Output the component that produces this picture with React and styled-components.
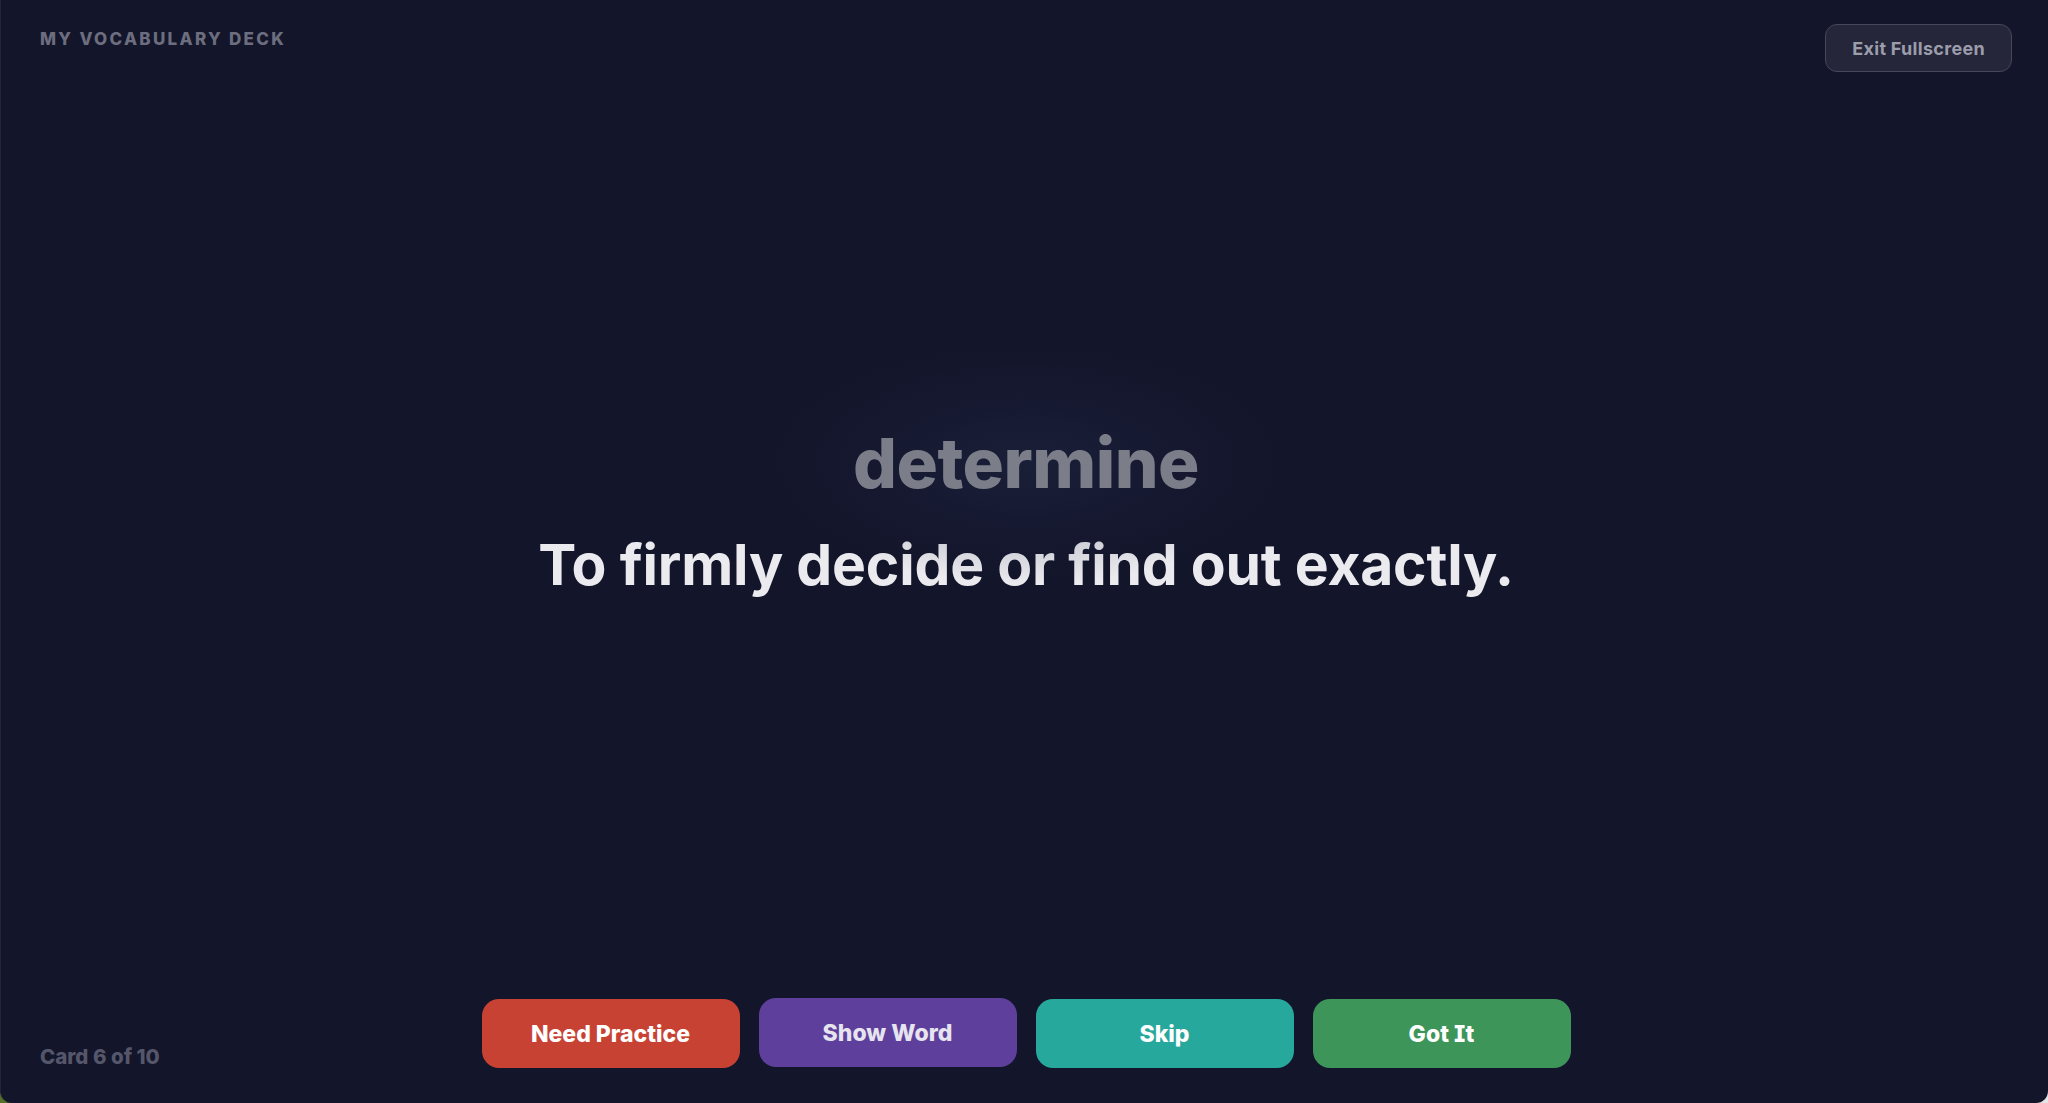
import React from "react";
import styled, { createGlobalStyle } from "styled-components";

const Global = createGlobalStyle`
  html, body { margin: 0; padding: 0; height: 100%; }
  body {
    background: linear-gradient(90deg, #56702a 0%, #3b4a2a 30%, #9aa0a8 70%, #e4e4e4 100%);
    font-family: Inter, "Noto Sans", Lato, sans-serif;
    font-feature-settings: "cv08" 1;
    overflow: hidden;
  }
  #root { height: 100%; }
`;

const Screen = styled.div`
  height: 100vh;
  box-sizing: border-box;
  background: #13152a;
  border-radius: 0 0 12px 12px;
  border-left: 1px solid #22243a;
  display: grid;
  grid-template-rows: auto 1fr auto;
  padding: 24px 36px 35px 39px;
  position: relative;
  overflow: hidden;
`;

const TopBar = styled.header`
  display: flex;
  justify-content: space-between;
  align-items: flex-start;
`;

const DeckTitle = styled.h1`
  margin: 5px 0 0;
  font-size: 17px;
  font-weight: 800;
  letter-spacing: 2.3px;
  color: #6c6d7e;
  text-transform: uppercase;
`;

const GhostButton = styled.button`
  height: 48px;
  padding: 0 26px;
  border-radius: 12px;
  border: 1.5px solid #45475a;
  background: #25263a;
  color: #9c9dab;
  font-family: inherit;
  font-feature-settings: "cv08" 1;
  font-size: 18px;
  font-weight: 700;
  letter-spacing: 0.3px;
  cursor: pointer;
`;

const Stage = styled.main`
  display: flex;
  flex-direction: column;
  align-items: center;
  justify-content: center;
  padding-bottom: 46px;
`;

const WordWrap = styled.div`
  position: relative;
  display: flex;
  justify-content: center;
  margin-bottom: 36px;
`;

const Glow = styled.div`
  position: absolute;
  left: 50%;
  top: 50%;
  width: 520px;
  height: 240px;
  transform: translate(-50%, -50%);
  border-radius: 50%;
  background: radial-gradient(ellipse at center, rgba(40, 52, 86, 0.32) 0%, rgba(30, 38, 70, 0.16) 45%, rgba(19, 21, 42, 0) 72%);
  pointer-events: none;
`;

const Word = styled.div`
  position: relative;
  font-size: 69px;
  font-weight: 800;
  letter-spacing: -0.5px;
  color: #7b7d89;
  line-height: 1;
`;

const Definition = styled.div`
  font-size: 57px;
  font-weight: 700;
  color: #ebebef;
  line-height: 1.1;
  letter-spacing: -0.2px;
`;

const BottomBar = styled.footer`
  display: grid;
  grid-template-columns: 1fr auto 1fr;
  align-items: end;
`;

const Counter = styled.div`
  font-size: 20.5px;
  font-weight: 800;
  color: #55566a;
  margin-bottom: -1px;
`;

const Actions = styled.div`
  display: flex;
  gap: 19px;
  align-items: center;
`;

const ActionButton = styled.button`
  width: 258px;
  height: 69px;
  border: none;
  border-radius: 17px;
  background: ${(p) => p.$bg};
  color: ${(p) => p.$fg || "#ffffff"};
  font-family: inherit;
  font-feature-settings: "cv08" 1;
  font-size: 23px;
  font-weight: 800;
  cursor: pointer;
  transform: translateY(${(p) => (p.$raised ? "-1px" : "0")});
`;

const buttons = [
  { label: "Need Practice", bg: "#c84233" },
  { label: "Show Word", bg: "#5e3f9c", fg: "#e6e4ee", raised: true },
  { label: "Skip", bg: "#27a89c" },
  { label: "Got It", bg: "#3d955a" },
];

export default function App() {
  return (
    <>
      <Global />
      <Screen>
        <TopBar>
          <DeckTitle>My Vocabulary Deck</DeckTitle>
          <GhostButton>Exit Fullscreen</GhostButton>
        </TopBar>
        <Stage>
          <WordWrap>
            <Glow />
            <Word>determine</Word>
          </WordWrap>
          <Definition>To firmly decide or find out exactly.</Definition>
        </Stage>
        <BottomBar>
          <Counter>Card 6 of 10</Counter>
          <Actions>
            {buttons.map((b) => (
              <ActionButton key={b.label} $bg={b.bg} $fg={b.fg} $raised={b.raised}>
                {b.label}
              </ActionButton>
            ))}
          </Actions>
          <div />
        </BottomBar>
      </Screen>
    </>
  );
}
